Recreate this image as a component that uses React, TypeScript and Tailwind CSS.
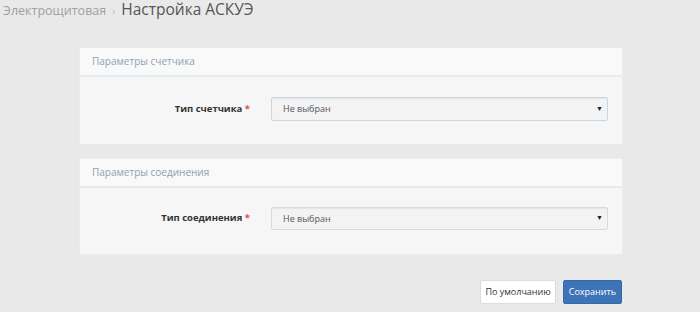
import React from "react";

function Panel({
  title,
  label,
  bodyH,
  selectH,
  selectPt,
  selectBorder,
}: {
  title: string;
  label: string;
  bodyH: string;
  selectH: string;
  selectPt: string;
  selectBorder: string;
}) {
  return (
    <div className="w-[542px] ml-[80px] bg-[#f6f6f6] shadow-[0_0_0_1px_#ececec]">
      <div className="h-[29px] bg-[#f9f9f9] border-b-2 border-[#e3ecf1] flex items-center pl-[12px] text-[10px] text-[#8aa2b4]">
        {title}
      </div>
      <div className={`flex items-start ${bodyH} ${selectPt}`}>
        <div className={`w-[180px] ${selectH} flex items-center justify-end pr-[10px] text-[9.5px] font-bold text-[#333]`}>
          {label}&nbsp;<span className="text-[#d9534f]">*</span>
        </div>
        <div
          className={`w-[337px] ${selectH} ml-[11px] border ${selectBorder} rounded-[2px] bg-[#f3f3f3] flex items-center justify-between pl-[11px] pr-[4px] text-[9px] text-[#555] shadow-[inset_0_1px_1px_rgba(0,0,0,0.06)]`}
        >
          <span>Не выбран</span>
          <span className="text-[7px] text-[#222]">▼</span>
        </div>
      </div>
    </div>
  );
}

export default function App() {
  return (
    <div
      className="w-[700px] h-[312px] bg-[#e9e9e9] overflow-hidden"
      style={{ fontFamily: '"Open Sans", "Noto Sans", sans-serif' }}
    >
      <div className="flex items-baseline h-[22px] -mt-[2px] pl-[3px]">
        <span className="text-[12.5px] text-[#a0a0a0]">Электрощитовая</span>
        <span className="text-[10px] text-[#bbb] mx-[6px]">›</span>
        <span className="text-[15.5px] text-[#555]">Настройка АСКУЭ</span>
      </div>
      <div className="mt-[28px]">
        <Panel
          title="Параметры счетчика"
          label="Тип счетчика"
          bodyH="h-[67px]"
          selectH="h-[24px]"
          selectPt="pt-[20px]"
          selectBorder="border-[#c6d8e6]"
        />
      </div>
      <div className="mt-[15px]">
        <Panel
          title="Параметры соединения"
          label="Тип соединения"
          bodyH="h-[66px]"
          selectH="h-[23px]"
          selectPt="pt-[19px]"
          selectBorder="border-[#dadada]"
        />
      </div>
      <div className="flex justify-end w-[622px] gap-[7px] mt-[26px]">
        <button className="h-[24px] px-[4px] bg-white border border-[#ddd] rounded-[2px] text-[9px] text-[#333]">
          По умолчанию
        </button>
        <button className="h-[24px] px-[5px] bg-[#3d74b8] border border-[#3569a8] rounded-[2px] text-[9px] text-white">
          Сохранить
        </button>
      </div>
    </div>
  );
}
